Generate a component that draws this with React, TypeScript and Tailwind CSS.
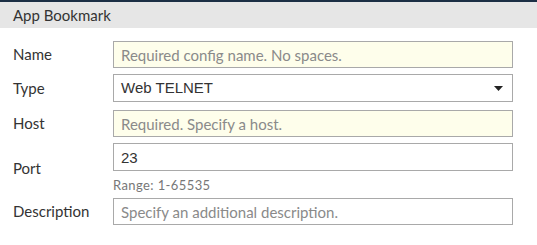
const LABEL = "w-[100px] shrink-0 text-[15px] text-[#333333]";
const INPUT =
  "w-[400px] h-[27px] border border-[#a9a9a9] px-[7px] text-[15px] outline-none placeholder:text-[#8a8a8a]";

export default function App() {
  return (
    <div className="w-[537px] h-[245px] bg-white font-['Lato',sans-serif]">
      <div className="h-[28px] border-t-2 border-[#1c2f45] bg-[#e6e6e6] px-[13px] flex items-center text-[15px] text-[#333333]">
        App Bookmark
      </div>

      <div className="pl-[13px] pt-[13px]">
        <div className="flex items-center">
          <span className={LABEL}>Name</span>
          <input className={`${INPUT} bg-[#fefeeb]`} placeholder="Required config name. No spaces." />
        </div>

        <div className="mt-[6px] flex items-center">
          <span className={LABEL}>Type</span>
          <div className="w-[400px] h-[28px] border border-[#a9a9a9] px-[7px] flex items-center justify-between">
            <span className="font-['Liberation_Sans',sans-serif] text-[15px] text-[#333333]">Web TELNET</span>
            <svg width="9" height="5" viewBox="0 0 9 5" className="mr-[2px]">
              <path d="M0 0 H9 L4.5 5 Z" fill="#222222" />
            </svg>
          </div>
        </div>

        <div className="mt-[8px] flex items-center">
          <span className={LABEL}>Host</span>
          <input className={`${INPUT} bg-[#fefeeb]`} placeholder="Required. Specify a host." />
        </div>

        <div className="mt-[6px] flex items-center">
          <span className={LABEL}>Port</span>
          <div className="flex flex-col">
            <input
              className={`${INPUT} h-[28px] bg-white font-['Liberation_Sans',sans-serif] text-[#333333]`}
              defaultValue="23"
            />
            <span className="mt-[6px] text-[13px] leading-[17px] tracking-[0.4px] text-[#777777]">Range: 1-65535</span>
          </div>
        </div>

        <div className="mt-[4px] flex items-center">
          <span className={LABEL}>Description</span>
          <input className={`${INPUT} bg-white`} placeholder="Specify an additional description." />
        </div>
      </div>
    </div>
  );
}
